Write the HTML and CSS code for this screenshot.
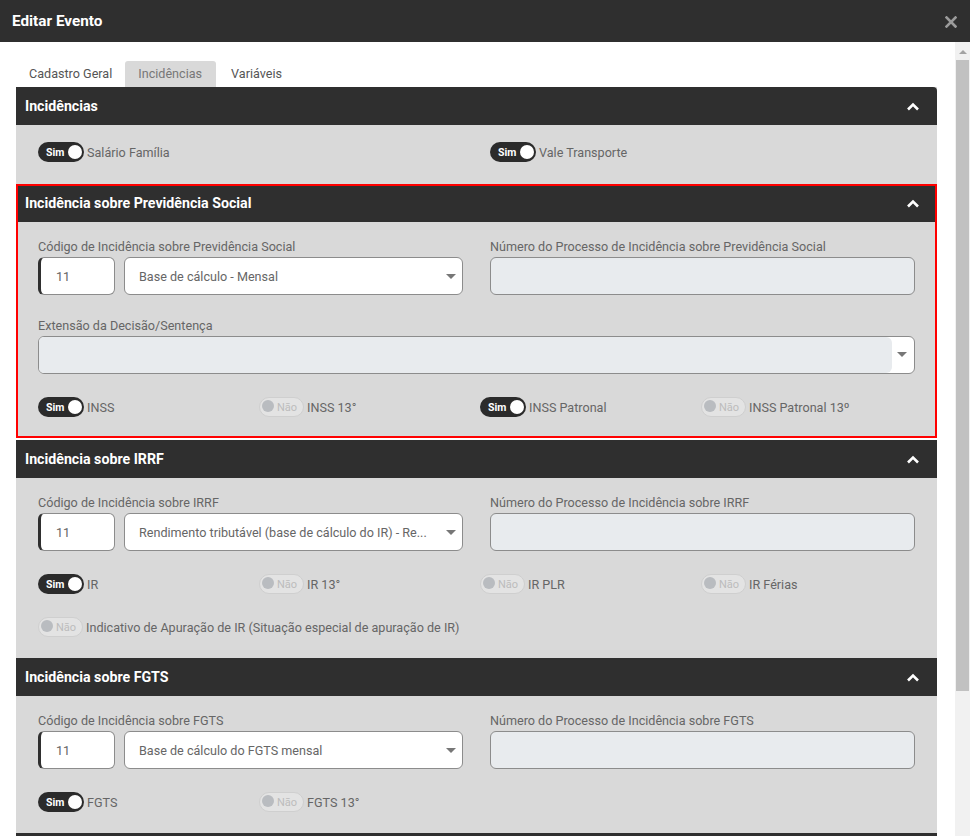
FILE: index.html
```html
<!DOCTYPE html>
<html lang="pt-BR">
<head>
    <meta charset="UTF-8">
    <title>Editar Evento</title>
    <link rel="stylesheet" href="styles.css">
</head>
<body>
    <div class="modal">
        <div class="modal-header">
            <h1>Editar Evento</h1>
            <svg class="close" width="12" height="12" viewBox="0 0 12 12">
                <path d="M1.5 1.5 L10.5 10.5 M10.5 1.5 L1.5 10.5" stroke="#9b9b9b" stroke-width="2.6" stroke-linecap="square"/>
            </svg>
        </div>

        <div class="modal-main">
            <div class="modal-body">
                <ul class="tabs">
                    <li>Cadastro Geral</li>
                    <li class="active">Incidências</li>
                    <li>Variáveis</li>
                </ul>

                <!-- Incidências -->
                <section class="panel first">
                    <div class="panel-heading">
                        <h2>Incidências</h2>
                        <svg class="chevron" width="14" height="9" viewBox="0 0 14 9"><polyline points="2,7.5 7,2.5 12,7.5" fill="none" stroke="#fff" stroke-width="2.6"/></svg>
                    </div>
                    <div class="panel-body">
                        <div class="row-2">
                            <div class="switch-item"><span class="switch on">Sim</span>Salário Família</div>
                            <div class="switch-item"><span class="switch on">Sim</span>Vale Transporte</div>
                        </div>
                    </div>
                </section>

                <!-- Previdência Social -->
                <section class="panel highlight">
                    <div class="panel-heading">
                        <h2>Incidência sobre Previdência Social</h2>
                        <svg class="chevron" width="14" height="9" viewBox="0 0 14 9"><polyline points="2,7.5 7,2.5 12,7.5" fill="none" stroke="#fff" stroke-width="2.6"/></svg>
                    </div>
                    <div class="panel-body">
                        <div class="row-2">
                            <div class="form-group">
                                <label>Código de Incidência sobre Previdência Social</label>
                                <div class="code-select">
                                    <div class="field code">11</div>
                                    <div class="field select">Base de cálculo - Mensal</div>
                                </div>
                            </div>
                            <div class="form-group">
                                <label>Número do Processo de Incidência sobre Previdência Social</label>
                                <div class="field disabled"></div>
                            </div>
                        </div>
                        <div class="form-group">
                            <label>Extensão da Decisão/Sentença</label>
                            <div class="field combo"><span class="combo-text"></span><span class="combo-btn"></span></div>
                        </div>
                        <div class="row-4">
                            <div class="switch-item"><span class="switch on">Sim</span>INSS</div>
                            <div class="switch-item"><span class="switch off">Não</span>INSS 13°</div>
                            <div class="switch-item"><span class="switch on">Sim</span>INSS Patronal</div>
                            <div class="switch-item"><span class="switch off">Não</span>INSS Patronal 13º</div>
                        </div>
                    </div>
                </section>

                <!-- IRRF -->
                <section class="panel">
                    <div class="panel-heading">
                        <h2>Incidência sobre IRRF</h2>
                        <svg class="chevron" width="14" height="9" viewBox="0 0 14 9"><polyline points="2,7.5 7,2.5 12,7.5" fill="none" stroke="#fff" stroke-width="2.6"/></svg>
                    </div>
                    <div class="panel-body">
                        <div class="row-2">
                            <div class="form-group">
                                <label>Código de Incidência sobre IRRF</label>
                                <div class="code-select">
                                    <div class="field code">11</div>
                                    <div class="field select">Rendimento tributável (base de cálculo do IR) - Re...</div>
                                </div>
                            </div>
                            <div class="form-group">
                                <label>Número do Processo de Incidência sobre IRRF</label>
                                <div class="field disabled"></div>
                            </div>
                        </div>
                        <div class="row-4">
                            <div class="switch-item"><span class="switch on">Sim</span>IR</div>
                            <div class="switch-item"><span class="switch off">Não</span>IR 13°</div>
                            <div class="switch-item"><span class="switch off">Não</span>IR PLR</div>
                            <div class="switch-item"><span class="switch off">Não</span>IR Férias</div>
                        </div>
                        <div class="switch-item"><span class="switch off">Não</span>Indicativo de Apuração de IR (Situação especial de apuração de IR)</div>
                    </div>
                </section>

                <!-- FGTS -->
                <section class="panel">
                    <div class="panel-heading">
                        <h2>Incidência sobre FGTS</h2>
                        <svg class="chevron" width="14" height="9" viewBox="0 0 14 9"><polyline points="2,7.5 7,2.5 12,7.5" fill="none" stroke="#fff" stroke-width="2.6"/></svg>
                    </div>
                    <div class="panel-body">
                        <div class="row-2">
                            <div class="form-group">
                                <label>Código de Incidência sobre FGTS</label>
                                <div class="code-select">
                                    <div class="field code">11</div>
                                    <div class="field select">Base de cálculo do FGTS mensal</div>
                                </div>
                            </div>
                            <div class="form-group">
                                <label>Número do Processo de Incidência sobre FGTS</label>
                                <div class="field disabled"></div>
                            </div>
                        </div>
                        <div class="row-4">
                            <div class="switch-item"><span class="switch on">Sim</span>FGTS</div>
                            <div class="switch-item"><span class="switch off">Não</span>FGTS 13°</div>
                        </div>
                    </div>
                </section>

                <!-- next panel, only its top edge is visible -->
                <section class="panel">
                    <div class="panel-heading"></div>
                </section>
            </div>

            <div class="scrollbar">
                <span class="scroll-arrow"></span>
                <span class="scroll-thumb"></span>
            </div>
        </div>
    </div>
</body>
</html>
```

FILE: styles.css
```css
html, body {
    margin: 0;
    height: 836px;
    overflow: hidden;
}

body {
    font-family: Roboto, 'Liberation Sans', sans-serif;
    font-size: 12.6px;
    color: #666;
    background-color: #fff;
}

.modal {
    display: flex;
    flex-direction: column;
    height: 836px;
}

.modal-header {
    height: 42px;
    background-color: #2f2f2f;
    display: flex;
    align-items: center;
    justify-content: space-between;
    padding: 0 13px 0 12px;
    flex-shrink: 0;
}

.modal-header h1 {
    margin: 0;
    font-size: 15.3px;
    font-weight: 700;
    color: #fff;
}

.close {
    margin-top: 1px;
}

.modal-main {
    display: flex;
    flex: 1;
    min-height: 0;
}

.modal-body {
    flex: 1;
    padding: 19px 18px 0 16px;
    overflow: hidden;
}

/* Tabs */
.tabs {
    list-style: none;
    margin: 0;
    padding: 0;
    display: flex;
    height: 26px;
}

.tabs li {
    padding: 0 13px;
    line-height: 26px;
    color: #555;
    font-size: 12.6px;
}

.tabs li.active {
    background-color: #d9d9d9;
    border-radius: 3px 3px 0 0;
    color: #777;
    padding: 0 14px 0 13px;
    margin-right: 2px;
}

/* Panels */
.panel {
    background-color: #d9d9d9;
}

.panel.first .panel-heading {
    border-radius: 0 4px 0 0;
}

.panel.highlight {
    outline: 2px solid #ff0000;
    outline-offset: -2px;
    margin-bottom: 2px;
}

.panel-heading {
    height: 38px;
    background-color: #2f2f2f;
    display: flex;
    align-items: center;
    justify-content: space-between;
    padding: 0 17px 0 9px;
}

.panel-heading h2 {
    margin: 0;
    font-size: 14.2px;
    font-weight: 700;
    color: #fff;
}

.chevron {
    display: block;
}

.panel-body {
    padding: 17px 22px 21px 22px;
    display: flex;
    flex-direction: column;
    gap: 23px;
}

.panel.first .panel-body {
    padding-top: 17px;
    padding-bottom: 22px;
}

.row-2 {
    display: grid;
    grid-template-columns: 425px 425px;
    column-gap: 27px;
}

.row-4 {
    display: grid;
    grid-template-columns: repeat(4, 221px);
}

/* Form fields */
label {
    display: block;
    line-height: 16px;
    margin-bottom: 2px;
    color: #666;
    font-size: 12.6px;
}

.field {
    height: 38px;
    box-sizing: border-box;
    border: 1px solid #8c8c8c;
    border-radius: 6px;
    background-color: #fff;
    display: flex;
    align-items: center;
    color: #666;
    font-size: 12.6px;
}

.field.disabled {
    background-color: #e8ebee;
}

.code-select {
    display: flex;
    gap: 9px;
}

.field.code {
    width: 77px;
    flex-shrink: 0;
    border-left: 3px solid #2f2f2f;
    padding-left: 15px;
}

.field.select {
    flex: 1;
    padding: 0 30px 0 14px;
    position: relative;
    white-space: nowrap;
    overflow: hidden;
}

.field.select::after {
    content: "";
    position: absolute;
    right: 6px;
    top: 16px;
    border-left: 5px solid transparent;
    border-right: 5px solid transparent;
    border-top: 5px solid #777;
}

.field.combo {
    overflow: hidden;
}

.combo-text {
    flex: 1;
    height: 100%;
    background-color: #e8ebee;
    border-radius: 0 6px 6px 0;
}

.combo-btn {
    width: 22px;
    height: 100%;
    position: relative;
}

.combo-btn::after {
    content: "";
    position: absolute;
    left: 5px;
    top: 15px;
    border-left: 5px solid transparent;
    border-right: 5px solid transparent;
    border-top: 5px solid #777;
}

/* Switches */
.switch-item {
    display: flex;
    align-items: center;
    height: 20px;
    color: #666;
    font-size: 12.6px;
}

.switch {
    position: relative;
    box-sizing: border-box;
    height: 20px;
    border-radius: 10px;
    margin-right: 3px;
    font-size: 10.5px;
    line-height: 21px;
}

.switch.on {
    width: 46px;
    background-color: #2b2b2b;
    color: #fff;
    font-weight: 700;
    padding-left: 8px;
}

.switch.on::after {
    content: "";
    position: absolute;
    right: 2px;
    top: 3px;
    width: 14px;
    height: 14px;
    border-radius: 50%;
    background-color: #fff;
}

.switch.off {
    width: 45px;
    background-color: #e3e3e3;
    border: 1px solid #cfcfcf;
    color: #bcbcbc;
    padding-left: 17px;
    line-height: 20px;
    font-size: 11px;
}

.switch.off::after {
    content: "";
    position: absolute;
    left: 2px;
    top: 2px;
    width: 12px;
    height: 12px;
    border-radius: 50%;
    background-color: #b9bcc0;
}

/* Fake scrollbar */
.scrollbar {
    width: 15px;
    background-color: #f1f1f1;
    position: relative;
    flex-shrink: 0;
}

.scroll-arrow {
    position: absolute;
    left: 4px;
    top: 8px;
    border-left: 4px solid transparent;
    border-right: 4px solid transparent;
    border-bottom: 4px solid #a3a3a3;
}

.scroll-thumb {
    position: absolute;
    left: 1px;
    right: 1px;
    top: 18px;
    height: 631px;
    background-color: #c1c1c1;
}
```
